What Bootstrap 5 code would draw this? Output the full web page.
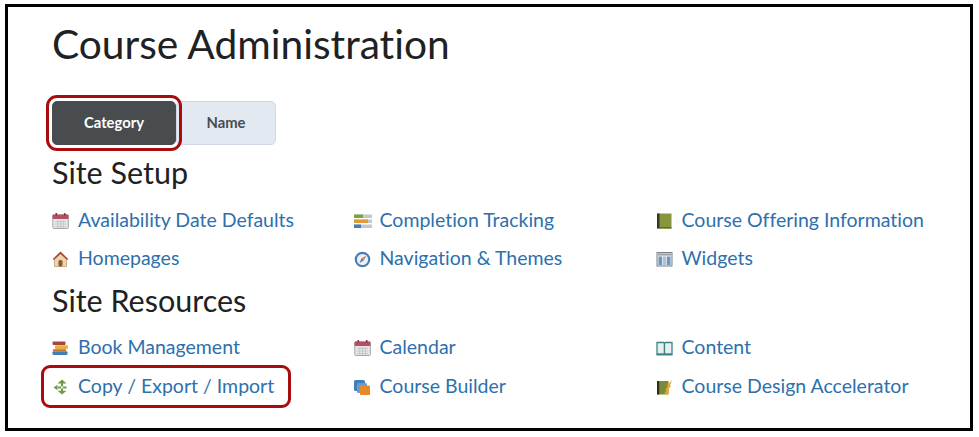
<!DOCTYPE html>
<html lang="en"><head><meta charset="utf-8"><title>Course Administration</title>
<link href="https://cdn.jsdelivr.net/npm/bootstrap@5.3.0/dist/css/bootstrap.min.css" rel="stylesheet">
<style>
html,body{height:437px;overflow:hidden;background:#fff}
body{font-family:Lato,"Liberation Sans",sans-serif;color:#202122;padding:4px 6px 6px 5px;font-variant-ligatures:none}
.frame{height:427px;border:3px solid #000;padding:0 44px}
.page-title{font-size:40.7px;font-weight:400;line-height:48px;margin:13px 0 0;color:#202122}
.sorter{margin-top:33px;height:44px;width:224px}
.sorter .btn{font-size:14.8px;font-weight:700;height:44px;padding:0 0 2px;border-radius:5px;position:relative}
.sort-on{width:124px;background:#494c4e;border:1px solid #494c4e;color:#fff;z-index:1;outline:3px solid #a80c0c;outline-offset:3px}
.sort-on:hover{background:#494c4e;color:#fff}
.sort-off{width:100px;background:#e3e9f1;border:1px solid #d3d9e3;color:#494c4e}
.sort-off:hover{background:#e3e9f1;color:#494c4e}
.section-title{font-size:30.5px;font-weight:400;line-height:34px;margin:10px 0 0;color:#202122}
.tools{display:grid;grid-template-columns:301.5px 302px auto;margin-top:12px}
.tool{height:38px;display:flex;align-items:center;gap:8px;position:relative;white-space:nowrap}
.tools.last .tool{height:39px}
.tool svg{width:18px;height:18px;flex:none;display:block;margin-top:2px}
.tool a{font-size:19.5px;color:#2d70ad;text-decoration:none;line-height:24px}
.mark-box{position:absolute;left:-11px;top:-1px;width:250px;height:43px;border:3px solid #a80c0c;border-radius:9px;pointer-events:none}
.section-title.second{margin-top:6px}
.tools.last{margin-top:10px}
</style></head><body>
<div class="frame">
<h1 class="page-title">Course Administration</h1>
<div class="sorter d-flex"><button class="btn sort-on" type="button">Category</button><button class="btn sort-off" type="button">Name</button></div>
<h2 class="section-title">Site Setup</h2>
<div class="tools">
<div class="tool"><svg viewBox="0 0 18 18"><rect x=".8" y="3" width="15.5" height="13.5" rx="1" fill="#e6e7e8" stroke="#a4a6a8"/><rect x=".5" y="2.5" width="16" height="4.5" rx="1" fill="#b4505f"/><rect x="3.5" y="1" width="1.6" height="3" fill="#8a3a48"/><rect x="11.9" y="1" width="1.6" height="3" fill="#8a3a48"/><path d="M3 9.5h11M3 12h11M3 14.5h11M5.7 8v8M8.5 8v8M11.3 8v8" stroke="#bdbfc1" stroke-width=".7"/></svg><a href="#">Availability Date Defaults</a></div>
<div class="tool"><svg viewBox="0 0 18 18"><rect x="0" y="2.5" width="18" height="3.5" fill="#c5c8ca"/><rect x="0" y="2.5" width="9" height="3.5" fill="#7da33f"/><rect x="0" y="7.5" width="18" height="3.5" fill="#c5c8ca"/><rect x="0" y="7.5" width="14" height="3.5" fill="#e39a35"/><rect x="0" y="12.5" width="18" height="3.5" fill="#c5c8ca"/><rect x="0" y="12.5" width="7" height="3.5" fill="#3f7fc0"/></svg><a href="#">Completion Tracking</a></div>
<div class="tool"><svg viewBox="0 0 18 18"><rect x="1.5" y="1.5" width="14" height="15" fill="#87963a"/><rect x="1" y="1.5" width="2.5" height="15" fill="#33381c"/><rect x="3.5" y="15.2" width="12" height="1.3" fill="#5c6628"/></svg><a href="#">Course Offering Information</a></div>
<div class="tool"><svg viewBox="0 0 18 18"><path d="M8.5 3 2.5 9v7.5h12V9z" fill="#ecd3ae" stroke="#b08a60" stroke-width=".6"/><path d="M8.5 1.5.8 9l1 1 6.700-6 6.700 6 1-1z" fill="#a5482f"/><rect x="6.5" y="10" width="4" height="6.5" rx="1.6" fill="#8a5a30"/></svg><a href="#">Homepages</a></div>
<div class="tool"><svg viewBox="0 0 18 18"><circle cx="8.5" cy="9.5" r="6.7" fill="#eaf1f8" stroke="#4a7fb5" stroke-width="2.2"/><path d="M12 6 9.5 10.5 5.500 13l2-4.500z" fill="#4a7fb5"/><path d="M12 6 7.500 8.500 9.500 10.500z" fill="#d9893a"/></svg><a href="#">Navigation &amp; Themes</a></div>
<div class="tool"><svg viewBox="0 0 18 18"><rect x="1" y="2.500" width="15" height="13.500" fill="#eceef0" stroke="#7d8082"/><rect x="2" y="3.500" width="13" height="2" fill="#9aa0a5"/><rect x="2.500" y="6.500" width="3.500" height="8.500" fill="#6d97bf"/><rect x="6.800" y="6.500" width="3.500" height="8.500" fill="#a9c3da"/><rect x="11" y="6.500" width="3.500" height="8.500" fill="#6d97bf"/></svg><a href="#">Widgets</a></div>
</div>
<h2 class="section-title second">Site Resources</h2>
<div class="tools last">
<div class="tool"><svg viewBox="0 0 18 18"><rect x="0.500" y="2.500" width="13" height="3.600" rx="1" fill="#a9443f"/><rect x="3" y="6.300" width="13" height="3.600" rx="1" fill="#e3b23c"/><rect x="1" y="10.200" width="13" height="1.800" fill="#c8703a"/><rect x="0.500" y="12.200" width="15" height="3.800" rx="1" fill="#3f7fb5"/></svg><a href="#">Book Management</a></div>
<div class="tool"><svg viewBox="0 0 18 18"><rect x=".8" y="3" width="15.500" height="13.500" rx="1" fill="#e6e7e8" stroke="#a4a6a8"/><rect x=".5" y="2.500" width="16" height="4.500" rx="1" fill="#b4505f"/><rect x="3.500" y="1" width="1.600" height="3" fill="#8a3a48"/><rect x="11.900" y="1" width="1.600" height="3" fill="#8a3a48"/><path d="M3 9.500h11M3 12h11M3 14.500h11M5.700 8v8M8.500 8v8M11.300 8v8" stroke="#bdbfc1" stroke-width=".7"/></svg><a href="#">Calendar</a></div>
<div class="tool"><svg viewBox="0 0 18 18"><path d="M1 3.500h6.500q1 0 1 1v10.500H1z" fill="#e8f0f2" stroke="#3f8585" stroke-width="1.300"/><path d="M16 3.500H9.500q-1 0-1 1v10.500H16z" fill="#e8f0f2" stroke="#3f8585" stroke-width="1.300"/><rect x=".5" y="15" width="16" height="1.500" fill="#3f8585"/></svg><a href="#">Content</a></div>
<div class="tool"><span class="mark-box"></span><svg viewBox="0 0 18 18"><path d="M10 1.500 14.500 5.500H5.500zM9 5h2v9H9zM14.500 8.500H5v2h9.500zM1.500 9.500 5.500 6.800v5.400zM10 16.500 5.500 12.800h9z" fill="#6f9a45"/></svg><a href="#">Copy / Export / Import</a></div>
<div class="tool"><svg viewBox="0 0 18 18"><rect x="0" y="2" width="11" height="11" rx="1.500" fill="#3f7fc0"/><rect x="3" y="5" width="10" height="10" rx="1.500" fill="#6a9ad0"/><rect x="6" y="7.500" width="10" height="9.500" rx="1" fill="#e58a25"/></svg><a href="#">Course Builder</a></div>
<div class="tool"><svg viewBox="0 0 18 18"><rect x="1.500" y="3" width="11" height="13.500" fill="#7a8a3a"/><rect x="1" y="3" width="2.200" height="13.500" fill="#2d2d1a"/><path d="M16 2 10.500 8l1.500.5-3 3 1.500.5-2.500 4.500h3l2-2.500V10l2-1.500-1-1z" fill="#e6a53a"/></svg><a href="#">Course Design Accelerator</a></div>
</div>
</div>
</body></html>
